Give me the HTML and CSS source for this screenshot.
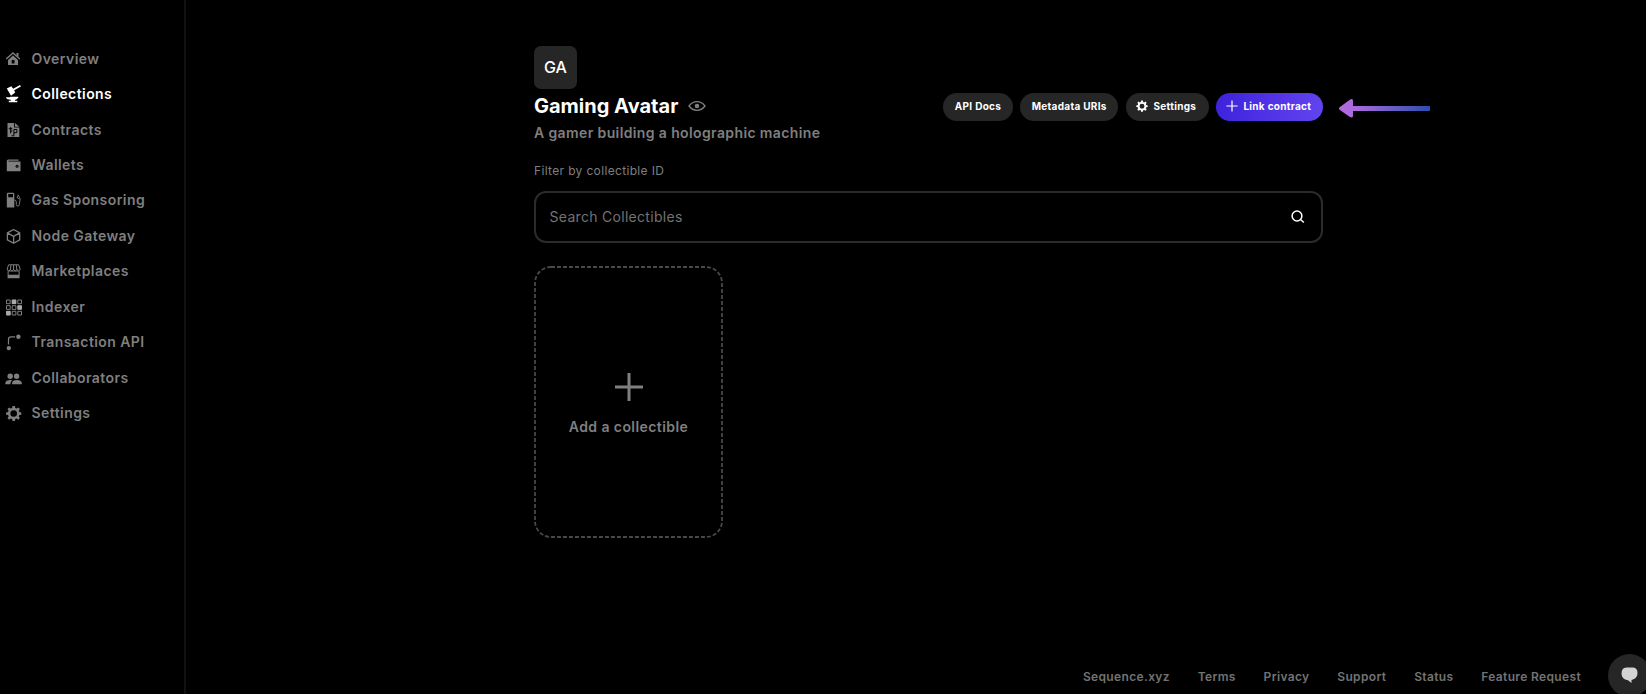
FILE: index.html
```html
<!DOCTYPE html>
<html lang="en">
<head>
<meta charset="utf-8">
<title>Gaming Avatar</title>
<link rel="stylesheet" href="styles.css">
</head>
<body>
<div class="app">
  <nav class="sidebar">
    <a class="nav-item"><svg class="nav-icon" viewBox="0 0 16 16"><path d="M1.2 8 8 2l6.800 6" fill="none" stroke="currentColor" stroke-width="1.400"/><path d="M11.500 2h2v4l-2-1.700z"/><path fill-rule="evenodd" d="M8 4.500 13 9v5H3V9zM6.700 9v3.400h2.800V9z"/></svg><span>Overview</span></a>
    <a class="nav-item active"><svg class="nav-icon" viewBox="0 0 16 16"><path d="m1.800 2.400 4.500-2.200 1.900 2.500L15-1l.9 1.400-6.700 3.800 1 2.300-4.200 3.200z"/><path d="M.8 11.200h4.500V10.800h8v.8c-1 1.700-2.300 2-3.300 2.300v.9h2.300v1.500H3.800v-1.500h2v-1C3.500 13.600 1.500 13 .8 11.200z"/></svg><span>Collections</span></a>
    <a class="nav-item"><svg class="nav-icon" viewBox="0 0 16 16"><path d="M2.500 1h6.600v4.400h5.200V15H2.500z"/><path d="M10 1 14.200 4.700H10z"/><path d="M3.800 6.700h3.500M5.700 5v6.500M7.300 9H5M8.900 13.500V7.500h3v3.200h-3M6.500 13.800h2.800" fill="none" stroke="#000" stroke-width="1"/></svg><span>Contracts</span></a>
    <a class="nav-item"><svg class="nav-icon" viewBox="0 0 16 16"><path d="M3.300 2.500h10.200v1.200H3.500v.9h12V14.300H1.800V4q0-1.500 1.500-1.500z"/><circle cx="12.100" cy="9.300" r="1.500" fill="#000"/><circle cx="12.100" cy="9.300" r=".5"/></svg><span>Wallets</span></a>
    <a class="nav-item"><svg class="nav-icon" viewBox="0 0 16 16"><path fill-rule="evenodd" d="M1.800 2q0-1.300 1.300-1.300h5Q9.300.7 9.300 2v13.500H1.800zm1.400 0v3.300H8V2z"/><path d="M9.300 8q2 0 2 2v2.400q0 1.700 1.500 1.700t1.600-1.700L15.200 7 13 2.500M12.700 3.700l-.5 2 2.300 1.300" fill="none" stroke="currentColor" stroke-width=".9"/></svg><span>Gas Sponsoring</span></a>
    <a class="nav-item"><svg class="nav-icon" viewBox="0 0 16 16"><path d="m8.600 1.500 6.100 3.400v7l-6.100 3.400-6.200-3.400v-7zM2.400 4.900l6.200 3.500 6.100-3.500M8.600 8.300v7" fill="none" stroke="currentColor" stroke-width="1.300" stroke-linejoin="round"/></svg><span>Node Gateway</span></a>
    <a class="nav-item"><svg class="nav-icon" viewBox="-.8 -.3 16 16"><path d="M2.800 1.500h10.100l1.400 4.200q0 1.800-1.600 1.800T11 5.700q0 1.800-1.600 1.800T7.800 5.700q0 1.800-1.600 1.800T4.600 5.700q0 1.800-1.600 1.800T1.400 5.700zM5.200 1.500l-.6 4.200M7.800 1.500v4.200M10.400 1.500l.6 4.200" fill="none" stroke="currentColor" stroke-width="1"/><path fill-rule="evenodd" d="M1.800 8h12v7h-12zm1 .5V11.500h10V8.500z"/></svg><span>Marketplaces</span></a>
    <a class="nav-item"><svg class="nav-icon" viewBox="-1 -.5 16 16"><path d="M.5.500h3.700v3.700H.5zM6.200.500h3.700v3.700H6.200zM11.800.500h3.700v3.700h-3.700zM.5 6.200h3.700v3.700H.5zM6.200 6.200h3.700v3.700H6.200zM11.800 6.200h3.700v3.700h-3.700zM.5 11.800h3.700v3.700H.5zM6.200 11.800h3.700v3.700H6.200zM11.800 11.800h3.700v3.700h-3.700z" fill="none" stroke="currentColor"/><path class="bright" d="M5.900.200h4.200v4.200H5.900zM11.600 5.900h4.200v4.200h-4.200zM.2 11.600h4.200v4.200H.2z"/></svg><span>Indexer</span></a>
    <a class="nav-item"><svg class="nav-icon" viewBox="-.8 -.5 16 16"><circle cx="3" cy="13.600" r="2.200"/><circle cx="12.600" cy="2.200" r="2.200"/><path d="M2.700 10V5q0-2.700 2.600-2.700h4" fill="none" stroke="currentColor" stroke-width="1.200"/></svg><span>Transaction API</span></a>
    <a class="nav-item"><svg class="nav-icon" viewBox="-.6 -1 16 16"><circle cx="4.600" cy="5.200" r="2.700"/><circle cx="11" cy="5.200" r="2.700"/><path d="M-.3 13.300V12q.5-3 5-3 1.200 0 2 .3-1.800 1-2 4zM6.500 13.300V12q.2-3 4.700-3t5 3v1.300z"/></svg><span>Collaborators</span></a>
    <a class="nav-item"><svg class="nav-icon" viewBox="-.7 -.3 16 16"><use href="#gear"/></svg><span>Settings</span></a>
  </nav>
  <div class="page">
    <main class="content">
      <div class="avatar">GA</div>
      <header class="head">
        <div class="heading">
          <h1 class="title">Gaming Avatar
            <svg class="eye" viewBox="0 0 18 12"><path d="M1 6q3.300-4.300 8-4.300T17 6q-3.300 4.300-8 4.300T1 6z" fill="none" stroke="currentColor" stroke-width="1.300"/><circle cx="9" cy="6" r="2.300"/></svg>
          </h1>
          <p class="subtitle">A gamer building a holographic machine</p>
        </div>
        <div class="actions">
          <button class="btn btn-api">API Docs</button>
          <button class="btn btn-meta">Metadata URIs</button>
          <button class="btn btn-settings"><svg class="btn-gear" viewBox="0 0 16 16"><path id="gear" fill-rule="evenodd" d="M6.800.700h2.400l.4 2 1.300.5 1.700-1.100 1.600 1.600-1.100 1.700.5 1.400 2 .4v2.200l-2 .4-.5 1.300 1.100 1.700-1.600 1.600-1.700-1.100-1.300.5-.4 2H6.800l-.4-2-1.300-.5-1.700 1.100-1.600-1.600 1.100-1.700-.5-1.300-2-.4V7.200l2-.4.5-1.400-1.100-1.700 1.600-1.600 1.700 1.100 1.300-.5zM8 4.900a3.300 3.300 0 1 0 0 6.600 3.300 3.300 0 0 0 0-6.600z"/></svg>Settings</button>
          <button class="btn btn-link"><svg class="btn-plus" viewBox="0 0 12 12"><path d="M6 .4v11.200M.4 6h11.200" stroke="currentColor" stroke-width="1.200"/></svg>Link contract</button>
          <svg class="arrow" viewBox="0 0 92 19"><defs><linearGradient id="arrow-fill" gradientUnits="userSpaceOnUse" x1="0" y1="0" x2="92" y2="0"><stop offset="0" stop-color="#b36be0"/><stop offset=".2" stop-color="#aa68dc"/><stop offset="1" stop-color="#264fae"/></linearGradient></defs><path fill="url(#arrow-fill)" d="M.6 8.300 10.500.900q3.500-2 3.500 1v5.100h77v5H14v5q0 2.500-3.500.7L.6 10.700q-1.400-1.200 0-2.400z"/></svg>
        </div>
      </header>
      <label class="filter-label">Filter by collectible ID</label>
      <div class="search">
        <span class="placeholder">Search Collectibles</span>
        <svg class="search-icon" viewBox="0 0 14 14"><circle cx="6" cy="6" r="4.900"/><path d="m9.500 9.500 3.400 3"/></svg>
      </div>
      <div class="add-card">
        <svg class="dashes" viewBox="0 0 189 272"><rect x="1" y="1" width="187" height="270" rx="16"/></svg>
        <svg class="add-plus" viewBox="0 0 28 28"><path d="M14 0v28M0 14h28" stroke="currentColor" stroke-width="3"/></svg>
        <span class="add-text">Add a collectible</span>
      </div>
    </main>
    <footer class="footer">
      <a>Sequence.xyz</a><a>Terms</a><a>Privacy</a><a>Support</a><a>Status</a><a>Feature Request</a>
    </footer>
  </div>
</div>
<div class="chat"><svg class="chat-icon" viewBox="0 0 17 17"><path d="M5.500.500h6Q16.500.500 16.500 6q0 4.300-4 6.300L10.500 13v3L7 13.300Q.5 12.500.5 6.500.5.500 5.500.500z"/></svg></div>
</body>
</html>
```
FILE: styles.css
```css
* { box-sizing: border-box; }
body {
  margin: 0;
  background: #000;
  color: #fff;
  font-family: Inter, "Liberation Sans", sans-serif;
  overflow: hidden;
}
svg { display: block; flex: none; overflow: visible; fill: currentColor; }
.app { display: flex; height: 694px; }
.sidebar {
  width: 186px;
  padding: 41px 0 0 5px;
  border-right: 2px solid #111;
}
.nav-item {
  display: flex;
  align-items: center;
  gap: 10.500px;
  height: 35.450px;
  color: #7f7f7f;
  font-size: 14px;
  font-weight: 600;
  letter-spacing: .43px;
}
.nav-item.active { color: #fff; }
.nav-item span { padding-bottom: 1.200px; }
.nav-icon { width: 16px; height: 16px; }
.bright { fill: #aaa; }
.page { flex: 1; display: flex; flex-direction: column; }
.content { width: 897px; margin-left: 348px; padding-top: 46px; flex: 1; }
.avatar {
  width: 43px;
  height: 43px;
  display: flex;
  align-items: center;
  justify-content: center;
  padding-bottom: 2px;
  border-radius: 7px;
  background: #262626;
  font-size: 16px;
  font-weight: 500;
}
.head { display: flex; justify-content: space-between; }
.title {
  display: flex;
  align-items: center;
  gap: 10px;
  margin: 4px 0 0;
  font-size: 20px;
  line-height: 26px;
  font-weight: 700;
}
.eye { width: 18px; height: 12px; color: #7f7f7f; }
.subtitle {
  margin: 4px 0 0;
  color: #7f7f7f;
  font-size: 14px;
  line-height: 20px;
  font-weight: 600;
  letter-spacing: .38px;
}
.actions { display: flex; gap: 7.700px; padding-top: 4px; }
.btn {
  display: flex;
  align-items: center;
  justify-content: center;
  height: 27.500px;
  padding: 0 0 1px;
  border: 0;
  border-radius: 14px;
  background: #262626;
  color: #fff;
  font: 700 10px Inter, sans-serif;
  letter-spacing: .3px;
}
.btn-api { width: 69.500px; }
.btn-meta { width: 97.500px; }
.btn-settings { width: 83px; gap: 6px; padding-right: 2.500px; }
.btn-link { width: 107px; gap: 5.500px; padding-right: 2.500px; background: linear-gradient(100deg, #3d22dc, #6344f0); }
.btn-gear { width: 12px; height: 12px; }
.btn-plus { width: 12px; height: 12px; }
.arrow { width: 92px; height: 19px; margin: 5.500px 0 0 8px; }
.filter-label {
  display: block;
  margin-top: 19px;
  color: #7f7f7f;
  font-size: 12px;
  line-height: 18px;
  font-weight: 400;
  letter-spacing: .34px;
}
.search {
  display: flex;
  align-items: center;
  justify-content: space-between;
  width: 789px;
  height: 52px;
  margin-top: 11px;
  padding: 0 16px 0 13.500px;
  border: 2px solid #2b2b2b;
  border-radius: 12px;
}
.placeholder { padding-bottom: 2px; color: #737373; font-size: 14px; letter-spacing: .3px; }
.search-icon { width: 14px; height: 14px; fill: none; stroke: #fff; stroke-width: 1.500; }
.add-card {
  position: relative;
  display: flex;
  flex-direction: column;
  align-items: center;
  width: 189px;
  height: 272px;
  margin-top: 23px;
  padding-top: 106.500px;
  color: #7f7f7f;
}
.dashes {
  position: absolute;
  inset: 0;
  width: 189px;
  height: 272px;
  fill: none;
  stroke: #484848;
  stroke-width: 1.800;
  stroke-dasharray: 4 2;
}
.add-plus { width: 28px; height: 28px; }
.add-text { margin-top: 16.500px; font-size: 14px; line-height: 20px; font-weight: 600; letter-spacing: .42px; }
.footer {
  display: flex;
  justify-content: flex-end;
  gap: 27.800px;
  padding: 0 65px 9px 0;
  color: #737373;
  font-size: 12px;
  line-height: 17px;
  font-weight: 600;
  letter-spacing: .35px;
}
.chat {
  position: absolute;
  left: 1608px;
  top: 654px;
  width: 43px;
  height: 43px;
  display: flex;
  align-items: center;
  justify-content: center;
  border-radius: 50%;
  background: #262626;
  color: #d4d4d4;
}
.chat-icon { width: 17px; height: 17px; }
```
